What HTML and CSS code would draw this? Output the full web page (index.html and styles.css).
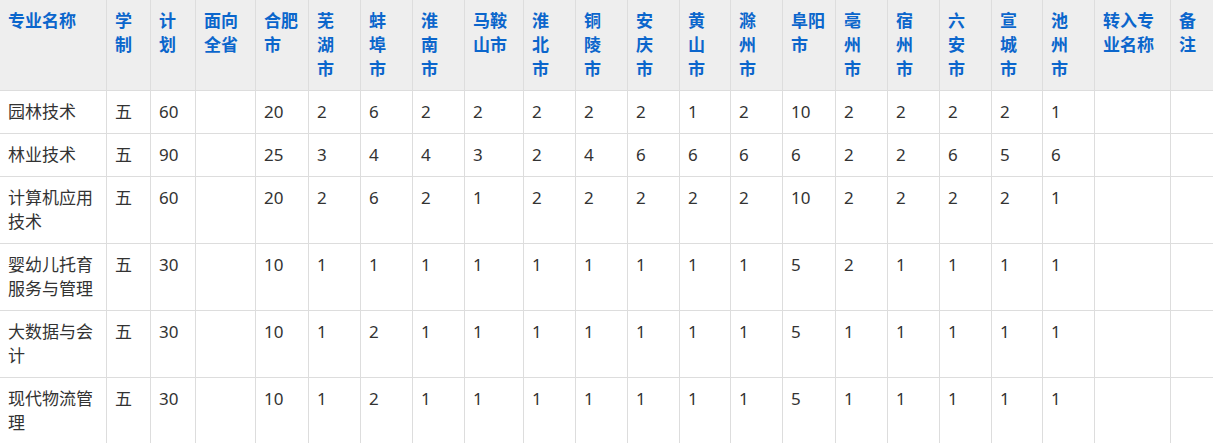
FILE: index.html
```html
<!DOCTYPE html>
<html lang="zh-CN">
<head>
<meta charset="utf-8">
<title>专业计划</title>
<link rel="stylesheet" href="styles.css">
</head>
<body>
<div class="wrap">
<table class="plan">
  <colgroup>
    <col class="w107"><col class="w44"><col class="w45"><col class="w60"><col class="w53">
    <col class="w52"><col class="w52"><col class="w52"><col class="w59"><col class="w52">
    <col class="w52"><col class="w52"><col class="w51"><col class="w52"><col class="w53">
    <col class="w52"><col class="w52"><col class="w52"><col class="w51"><col class="w52">
    <col class="w76"><col class="w80">
  </colgroup>
  <thead>
    <tr>
      <th>专业名称</th><th>学<br>制</th><th>计<br>划</th><th>面向<br>全省</th><th>合肥<br>市</th>
      <th>芜<br>湖<br>市</th><th>蚌<br>埠<br>市</th><th>淮<br>南<br>市</th><th>马鞍<br>山市</th><th>淮<br>北<br>市</th>
      <th>铜<br>陵<br>市</th><th>安<br>庆<br>市</th><th>黄<br>山<br>市</th><th>滁<br>州<br>市</th><th>阜阳<br>市</th>
      <th>亳<br>州<br>市</th><th>宿<br>州<br>市</th><th>六<br>安<br>市</th><th>宣<br>城<br>市</th><th>池<br>州<br>市</th>
      <th>转入专<br>业名称</th><th>备<br>注</th>
    </tr>
  </thead>
  <tbody>
    <tr><td>园林技术</td><td>五</td><td>60</td><td></td><td>20</td><td>2</td><td>6</td><td>2</td><td>2</td><td>2</td><td>2</td><td>2</td><td>1</td><td>2</td><td>10</td><td>2</td><td>2</td><td>2</td><td>2</td><td>1</td><td></td><td></td></tr>
    <tr><td>林业技术</td><td>五</td><td>90</td><td></td><td>25</td><td>3</td><td>4</td><td>4</td><td>3</td><td>2</td><td>4</td><td>6</td><td>6</td><td>6</td><td>6</td><td>2</td><td>2</td><td>6</td><td>5</td><td>6</td><td></td><td></td></tr>
    <tr><td>计算机应用<br>技术</td><td>五</td><td>60</td><td></td><td>20</td><td>2</td><td>6</td><td>2</td><td>1</td><td>2</td><td>2</td><td>2</td><td>2</td><td>2</td><td>10</td><td>2</td><td>2</td><td>2</td><td>2</td><td>1</td><td></td><td></td></tr>
    <tr><td>婴幼儿托育<br>服务与管理</td><td>五</td><td>30</td><td></td><td>10</td><td>1</td><td>1</td><td>1</td><td>1</td><td>1</td><td>1</td><td>1</td><td>1</td><td>1</td><td>5</td><td>2</td><td>1</td><td>1</td><td>1</td><td>1</td><td></td><td></td></tr>
    <tr><td>大数据与会<br>计</td><td>五</td><td>30</td><td></td><td>10</td><td>1</td><td>2</td><td>1</td><td>1</td><td>1</td><td>1</td><td>1</td><td>1</td><td>1</td><td>5</td><td>1</td><td>1</td><td>1</td><td>1</td><td>1</td><td></td><td></td></tr>
    <tr><td>现代物流管<br>理</td><td>五</td><td>30</td><td></td><td>10</td><td>1</td><td>2</td><td>1</td><td>1</td><td>1</td><td>1</td><td>1</td><td>1</td><td>1</td><td>5</td><td>1</td><td>1</td><td>1</td><td>1</td><td>1</td><td></td><td></td></tr>
  </tbody>
</table>
</div>
</body>
</html>
```
FILE: styles.css
```css
html, body {
  margin: 0;
  padding: 0;
  overflow: hidden;
  background: #fff;
}
.wrap {
  width: 1213px;
  height: 443px;
  overflow: hidden;
}
.plan {
  border-collapse: collapse;
  table-layout: fixed;
  width: 1252px;
  margin: -1px 0 0 -1px;
  font-family: "Noto Sans", "Noto Sans CJK SC", sans-serif;
  font-size: 17px;
  line-height: 24px;
  color: #333;
}
.plan th,
.plan td {
  border: 1px solid #ddd;
  padding: 9px 8px;
  text-align: left;
  vertical-align: top;
}
.plan th {
  background: #eee;
  color: #0b66cc;
  font-weight: bold;
}
.w107 { width: 107px; }
.w44 { width: 44px; }
.w45 { width: 45px; }
.w51 { width: 51px; }
.w52 { width: 52px; }
.w53 { width: 53px; }
.w59 { width: 59px; }
.w60 { width: 60px; }
.w76 { width: 76px; }
.w80 { width: 80px; }
```
